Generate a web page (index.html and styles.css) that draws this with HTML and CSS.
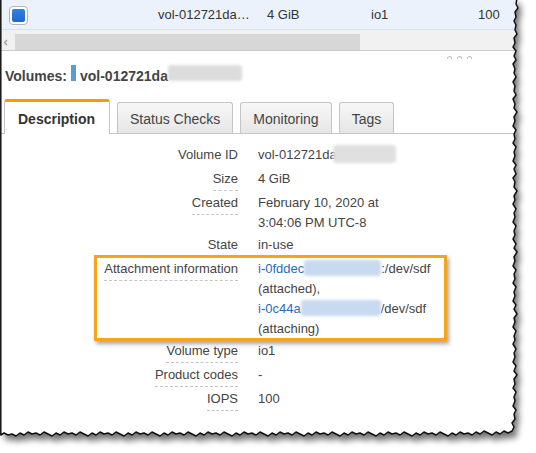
FILE: index.html
```html
<!DOCTYPE html>
<html lang="en">
<head>
<meta charset="utf-8">
<title>Volumes</title>
<link rel="stylesheet" href="styles.css">
</head>
<body>
<div class="sheet">
  <svg class="fx fx-shadow" width="536" height="453" viewBox="0 0 536 453" aria-hidden="true">
    <defs>
      <path id="edge" d="M517,-2 L516,4 L518,8 L515,12 L516,17 L514,21 L516,25 L515,30 L517,34 L514,38 L515,43 L513,47 L516,51 L514,56 L516,60 L513,64 L515,69 L514,73 L516,77 L513,82 L515,86 L514,91 L516,95 L513,99 L515,104 L514,108 L517,112 L514,117 L515,121 L513,126 L516,130 L514,134 L515,139 L513,143 L516,147 L514,152 L515,156 L513,161 L516,165 L514,169 L516,174 L513,178 L515,182 L514,187 L517,191 L514,196 L515,200 L513,204 L516,209 L514,213 L515,217 L513,222 L516,226 L514,231 L515,235 L513,239 L516,244 L514,248 L517,252 L514,257 L515,261 L513,266 L516,270 L514,274 L515,279 L513,283 L516,287 L514,292 L515,296 L513,301 L516,305 L514,309 L517,314 L514,318 L515,322 L513,327 L516,331 L514,336 L515,340 L513,344 L516,349 L514,353 L515,357 L513,362 L516,366 L514,371 L517,375 L514,379 L515,384 L513,388 L516,392 L514,397 L515,401 L513,406 L516,410 L514,414 L515,419 L512,423 L514,427 L512,431 L508,433 L504,431 L500,434 L496,432 L492,435 L488,433 L484,431 L480,434 L476,432 L472,435 L468,433 L464,434 L460,432 L456,435 L452,433 L448,436 L444,434 L440,432 L436,435 L432,433 L428,434 L424,432 L420,435 L416,433 L412,436 L408,434 L404,432 L400,435 L396,433 L392,434 L388,432 L384,435 L380,433 L376,436 L372,434 L368,432 L364,435 L360,433 L356,434 L352,432 L348,435 L344,433 L340,436 L336,434 L332,432 L328,435 L324,433 L320,434 L316,432 L312,435 L308,433 L304,436 L300,434 L296,432 L292,435 L288,433 L284,434 L280,432 L276,435 L272,433 L268,436 L264,434 L260,432 L256,435 L252,433 L248,434 L244,432 L240,435 L236,433 L232,436 L228,434 L224,432 L220,435 L216,433 L212,434 L208,432 L204,435 L200,433 L196,436 L192,434 L188,432 L184,435 L180,433 L176,434 L172,432 L168,435 L164,433 L160,436 L156,434 L152,432 L148,435 L144,433 L140,434 L136,432 L132,435 L128,433 L124,436 L120,434 L116,432 L112,435 L108,433 L104,434 L100,432 L96,435 L92,433 L88,436 L84,434 L80,432 L76,435 L72,433 L68,434 L64,432 L60,435 L56,433 L52,436 L48,434 L44,432 L40,435 L36,433 L32,434 L28,432 L24,435 L20,433 L16,436 L12,434 L8,435 L4,433 L0.8,435 L0.8,-2"/>
      <clipPath id="tear" clipPathUnits="userSpaceOnUse"><use href="#edge"/></clipPath>
      <filter id="soft" x="-10%" y="-10%" width="130%" height="130%"><feGaussianBlur stdDeviation="3"/></filter>
    </defs>
    <use href="#edge" fill="#000" opacity="0.55" filter="url(#soft)" transform="translate(4,6)"/>
  </svg>

  <div class="paper">
    <div class="row-top">
      <span class="cb"><span class="cb-in"></span></span>
      <span>vol-012721da…</span>
      <span>4 GiB</span>
      <span>io1</span>
      <span>100</span>
    </div>

    <div class="hscroll">
      <svg class="arrow" width="15" height="16" viewBox="0 0 15 16" aria-hidden="true"><polyline points="7,6 4.5,8.5 7,11" fill="none" stroke="#9a9a9a" stroke-width="1.2"/></svg>
      <span class="thumb"></span>
    </div>

    <div class="handle"><i></i><i></i><i></i></div>

    <h2 class="title">Volumes:<span class="bar"></span>vol-012721da<span class="blur blur-title"></span></h2>

    <div class="tabs">
      <span class="tab active">Description</span>
      <span class="tab">Status Checks</span>
      <span class="tab">Monitoring</span>
      <span class="tab">Tags</span>
    </div>

    <div class="details">
      <div class="k"><span class="nd">Volume ID</span></div>
      <div class="v">vol-012721da<span class="blur blur-id"></span></div>

      <div class="k"><span>Size</span></div>
      <div class="v">4 GiB</div>

      <div class="k"><span>Created</span></div>
      <div class="v">February 10, 2020 at<br>3:04:06 PM UTC-8</div>

      <div class="k"><span class="nd">State</span></div>
      <div class="v">in-use</div>

      <div class="k"><span>Attachment information</span></div>
      <div class="v"><a class="lnk">i-0fddec<span class="blur blur-a1"></span></a>:/dev/sdf<br>(attached),<br><a class="lnk">i-0c44a<span class="blur blur-a2"></span></a>/dev/sdf<br>(attaching)</div>

      <div class="k"><span>Volume type</span></div>
      <div class="v">io1</div>

      <div class="k"><span>Product codes</span></div>
      <div class="v">-</div>

      <div class="k"><span>IOPS</span></div>
      <div class="v">100</div>
    </div>

    <div class="hl"></div>
  </div>

  <svg class="fx fx-line" width="536" height="453" viewBox="0 0 536 453" aria-hidden="true">
    <use href="#edge" fill="none" stroke="#111" stroke-width="1.5" stroke-linejoin="round"/>
  </svg>
</div>
</body>
</html>
```

FILE: styles.css
```css
* { box-sizing: border-box; }

html, body {
  margin: 0;
  padding: 0;
  background: #fff;
}

body {
  font-family: "Liberation Sans", Arial, sans-serif;
  font-size: 13px;
  color: #444;
  width: 536px;
  height: 453px;
  overflow: hidden;
}

.sheet {
  position: relative;
  width: 536px;
  height: 453px;
}

.fx {
  position: absolute;
  left: 0;
  top: 0;
  width: 536px;
  height: 453px;
}

.fx-shadow { z-index: 0; }
.fx-line { z-index: 2; pointer-events: none; }

.paper {
  position: relative;
  z-index: 1;
  width: 536px;
  height: 453px;
  background: #fff;
  clip-path: url(#tear);
}

/* selected table row */
.row-top {
  display: grid;
  grid-template-columns: 149px 109px 104px 107px 40px;
  align-items: center;
  height: 30px;
  padding-left: 9px;
  background: #ebf2fc;
  border-bottom: 1px solid #dbe2ec;
  color: #333;
  line-height: 29px;
}

.cb {
  display: flex;
  align-items: center;
  justify-content: center;
  width: 19px;
  height: 19px;
  margin-top: 1px;
  border: 1px solid #b5b5b5;
  border-radius: 4px;
  background: #fff;
}

.cb-in {
  width: 13px;
  height: 13px;
  border-radius: 2px;
  background: linear-gradient(#3380e0, #1f68cc);
}

/* horizontal scrollbar */
.hscroll {
  display: flex;
  align-items: flex-start;
  height: 21px;
  padding-top: 4px;
  background: #f1f1f1;
  border-bottom: 1px solid #cbcbcb;
}

.arrow { display: block; flex: none; }

.thumb {
  width: 345px;
  height: 16px;
  background: #d7d7d7;
}

/* drag handle */
.handle {
  display: flex;
  gap: 5px;
  height: 14px;
  padding: 5px 0 0 447px;
}

.handle i {
  width: 5px;
  height: 3px;
  border: 1px solid #c4c4c4;
  border-bottom: none;
  border-radius: 3px 3px 0 0;
}

/* title */
.title {
  margin: 0;
  padding-left: 5px;
  height: 20px;
  font-size: 14px;
  font-weight: bold;
  line-height: 20px;
  color: #444;
  white-space: nowrap;
}

.bar {
  display: inline-block;
  width: 5px;
  height: 16px;
  margin: 0 4px 0 4px;
  background: #5b9bd6;
  vertical-align: 0;
}

.blur {
  display: inline-block;
  filter: blur(1.5px);
  border-radius: 3px;
}

.blur-title {
  width: 74px;
  height: 16px;
  background: #dcdcdc;
  vertical-align: 0;
}

/* tabs */
.tabs {
  display: flex;
  align-items: flex-end;
  gap: 7px;
  height: 35px;
  margin-top: 14px;
  padding-left: 4px;
  border-bottom: 1px solid #c6c6c6;
}

.tab {
  height: 31px;
  padding: 2px 12px 0;
  line-height: 28px;
  font-size: 14px;
  color: #444;
  border: 1px solid #c4c4c4;
  border-bottom: none;
  border-radius: 3px 3px 0 0;
  background: linear-gradient(#f7f7f7, #e6e6e6);
  white-space: nowrap;
}

.tab.active {
  height: 35px;
  margin-bottom: -1px;
  padding: 3px 14px 1px 13px;
  border-top: 3px solid #f90;
  background: #fff;
  font-weight: bold;
  color: #333;
}

/* details */
.details {
  display: grid;
  grid-template-columns: 238px auto;
  column-gap: 20px;
  align-items: start;
  padding-top: 11px;
}

.k {
  text-align: right;
  line-height: 20px;
  padding-bottom: 2px;
  white-space: nowrap;
}

.k span {
  display: inline-block;
  padding-bottom: 1px;
  border-bottom: 1px dashed #c6c6c6;
}

.k span.nd { border-bottom-color: transparent; }

.v {
  line-height: 20px;
  padding-bottom: 2px;
  white-space: nowrap;
  color: #444;
}

.lnk {
  color: #1f6cc1;
  text-decoration: none;
}

.blur-id {
  width: 63px;
  height: 18px;
  margin-left: -4px;
  background: #e0e0e0;
  vertical-align: -4px;
}

.blur-a1 {
  width: 77px;
  height: 16px;
  background: #c7daf0;
  vertical-align: -3px;
}

.blur-a2 {
  width: 80px;
  height: 16px;
  background: #c7daf0;
  vertical-align: -3px;
}

/* annotation highlight */
.hl {
  position: absolute;
  left: 94px;
  top: 255px;
  width: 353px;
  height: 86px;
  border: 3px solid #f6a51a;
  box-shadow: 2px 3px 4px rgba(0, 0, 0, 0.35);
}
```
